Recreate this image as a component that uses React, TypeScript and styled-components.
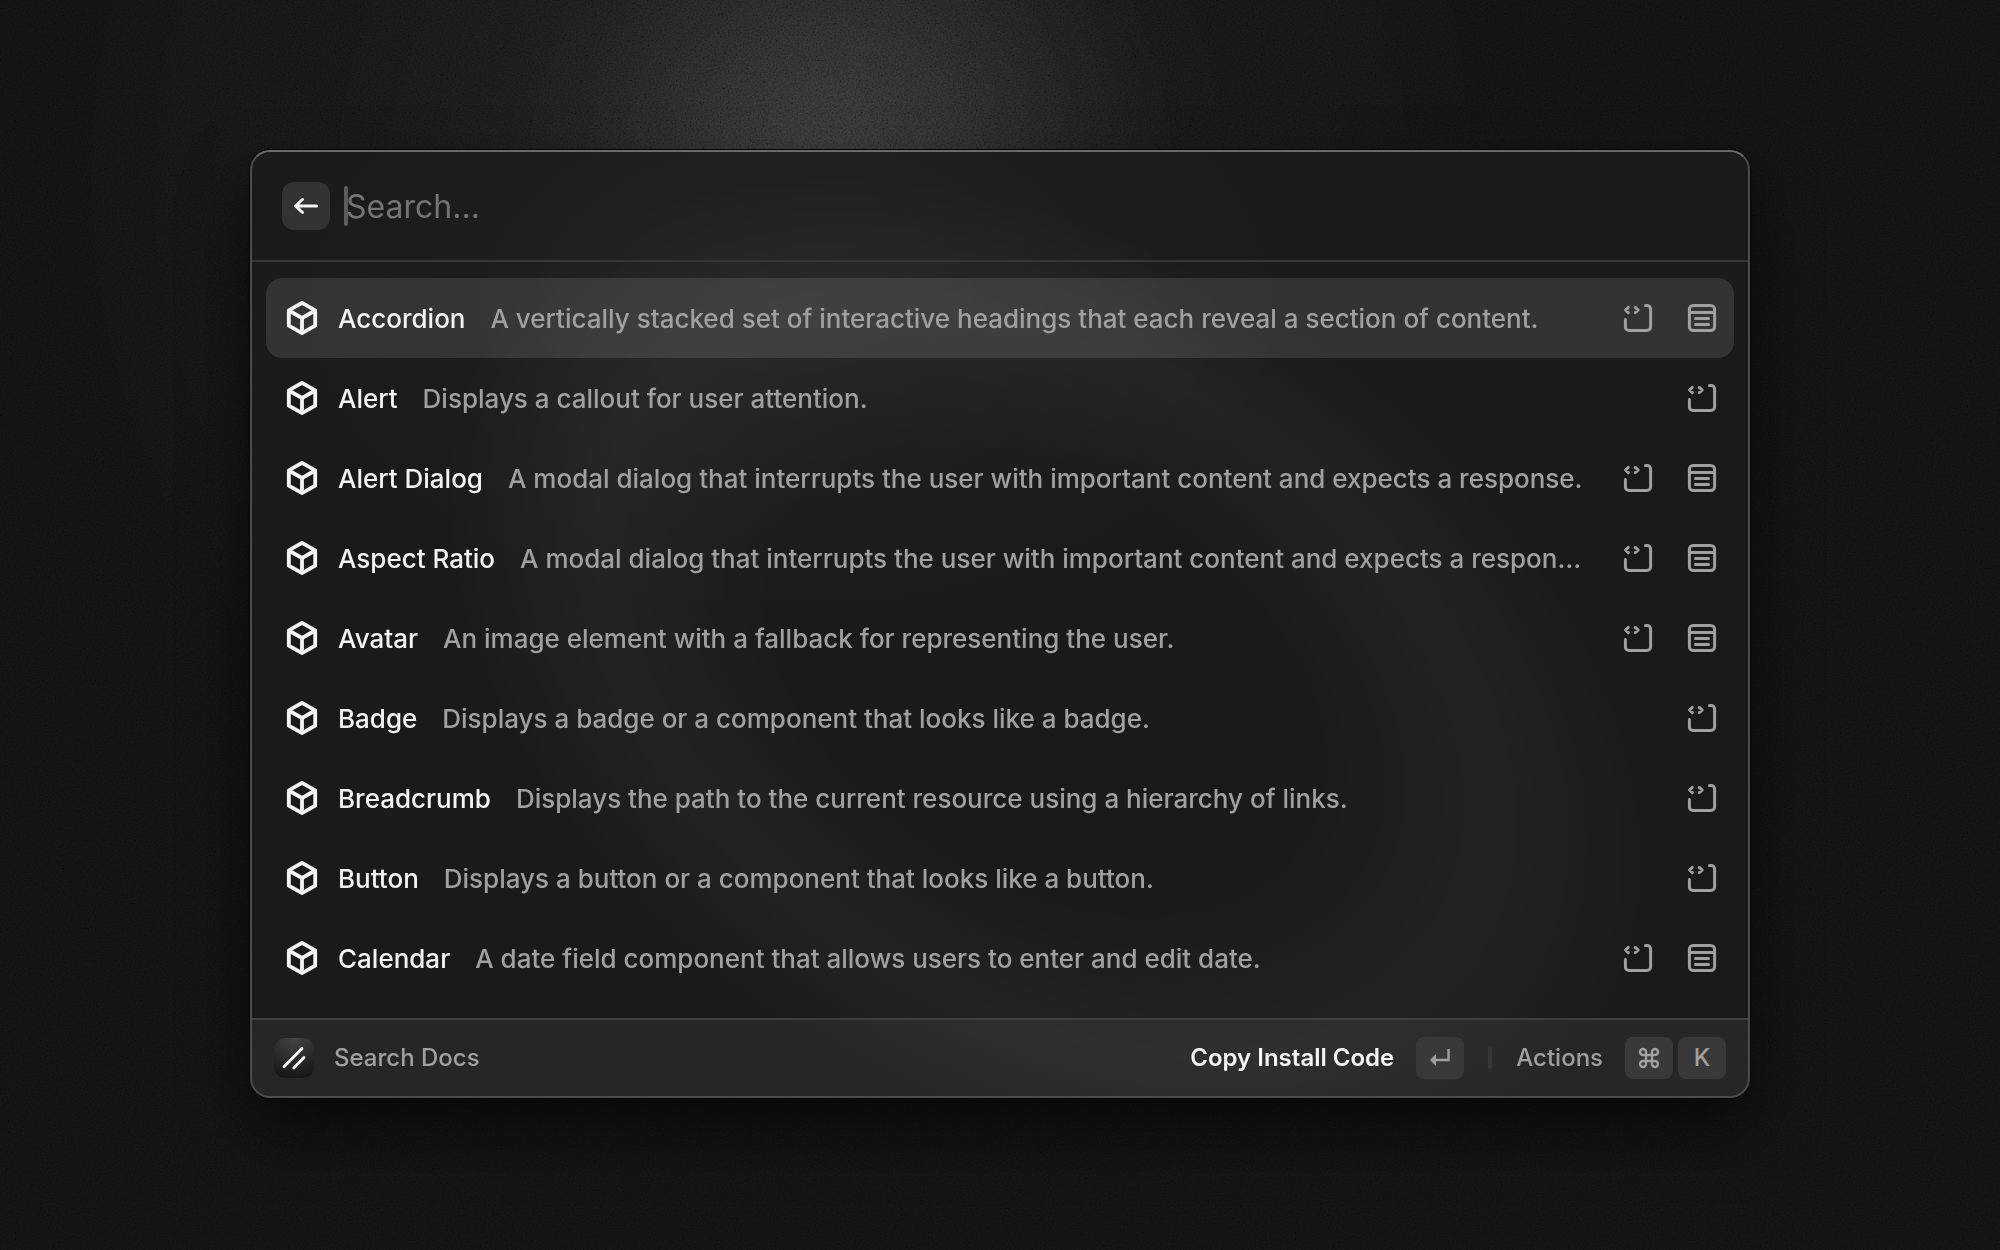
import React, { useState } from "react";
import styled, { createGlobalStyle } from "styled-components";

const GlobalStyle = createGlobalStyle`
  * { box-sizing: border-box; }
  html, body, #root { height: 100%; }
  body {
    margin: 0;
    background: #121212;
    font-family: Inter, "Liberation Sans", sans-serif;
    font-weight: 500;
    -webkit-font-smoothing: antialiased;
  }
  button, input { font: inherit; color: inherit; }
`;

const Stage = styled.main`
  position: relative;
  isolation: isolate;
  min-height: 100%;
  display: flex;
  justify-content: center;
  align-items: flex-start;
  padding: 150px 24px;
  overflow: hidden;
  background:
    radial-gradient(ellipse 17% 30% at 42% 14%, rgba(255, 255, 255, 0.1), rgba(255, 255, 255, 0.07) 35%, rgba(255, 255, 255, 0.02) 75%, transparent),
    radial-gradient(ellipse 36% 60% at 39% 14%, rgba(255, 255, 255, 0.06), rgba(255, 255, 255, 0.02) 60%, transparent),
    #121212;
`;

const Grain = styled.svg`
  position: absolute;
  inset: 0;
  z-index: -1;
  width: 100%;
  height: 100%;
  opacity: 0.3;
  mix-blend-mode: overlay;
`;

const Palette = styled.section`
  position: relative;
  isolation: isolate;
  width: 100%;
  max-width: 1500px;
  display: flex;
  flex-direction: column;
  border: 2px solid #4d4d4d;
  border-top-color: #6a6a6a;
  border-radius: 20px;
  overflow: hidden;
  color: #f4f4f4;
  box-shadow: 0 0 0 1px #050505, 0 32px 64px rgba(0, 0, 0, 0.6);
  background:
    radial-gradient(ellipse 34% 34% at 36% 16%, rgba(255, 255, 255, 0.035), rgba(255, 255, 255, 0.02) 50%, transparent),
    #1a1a1a;

  &::before {
    content: "";
    position: absolute;
    z-index: -1;
    left: 9%;
    top: 10%;
    width: 88%;
    height: 92%;
    transform: rotate(32deg);
    background: radial-gradient(closest-side, transparent 45%, rgba(255, 255, 255, 0.04) 74%, transparent 100%);
  }
`;

const Header = styled.header`
  display: flex;
  align-items: center;
  gap: 16px;
  padding: 30px;
  border-bottom: 2px solid #363636;
`;

const BackButton = styled.button`
  display: grid;
  place-items: center;
  width: 48px;
  height: 48px;
  padding: 0;
  border: 0;
  border-radius: 12px;
  background: #333;
`;

const SearchField = styled.label`
  position: relative;
  flex: 1;
  display: flex;
`;

const Caret = styled.span`
  position: absolute;
  left: -2px;
  top: 4px;
  width: 4px;
  height: 40px;
  border-radius: 2px;
  background: #5c5c5c;
`;

const SearchInput = styled.input`
  flex: 1;
  min-width: 0;
  height: 48px;
  padding: 0;
  border: 0;
  outline: 0;
  background: transparent;
  font-size: 32px;
  font-weight: 400;
  caret-color: #5c5c5c;
  &::placeholder { color: #747474; opacity: 1; }
`;

const List = styled.ul`
  margin: 0;
  padding: 16px 14px 20px;
  list-style: none;
`;

const Row = styled.li<{ $active: boolean }>`
  display: flex;
  align-items: center;
  height: 80px;
  padding: 0 16px 0 20px;
  border-radius: 16px;
  background: ${(p) => (p.$active ? "rgba(255, 255, 255, 0.11)" : "transparent")};
`;

const RowMain = styled.button`
  flex: 1;
  min-width: 0;
  display: flex;
  align-items: center;
  padding: 0;
  border: 0;
  background: transparent;
  text-align: left;
  font-size: 26px;
  line-height: 36px;
  svg { flex: none; margin-right: 20px; }
  span { padding-top: 2px; }
`;

const Name = styled.span`
  flex: none;
  margin-right: 25px;
`;

const Description = styled.span`
  flex: 0 1 auto;
  min-width: 0;
  overflow: hidden;
  white-space: nowrap;
  text-overflow: ellipsis;
  color: #a0a0a0;
`;

const RowIcons = styled.span`
  flex: none;
  display: flex;
  gap: 32px;
  margin-left: 34px;
  color: #a0a0a0;
`;

const Footer = styled.footer`
  display: flex;
  align-items: center;
  justify-content: space-between;
  height: 78px;
  padding: 0 22px;
  border-top: 2px solid #404040;
  background: rgba(255, 255, 255, 0.055);
  font-size: 24px;
  line-height: 32px;
`;

const Cluster = styled.div<{ $gap: number }>`
  display: flex;
  align-items: center;
  gap: ${(p) => p.$gap}px;
`;

const FooterLabel = styled.span`
  color: #a0a0a0;
`;

const FooterAction = styled.button<{ $primary?: boolean }>`
  display: flex;
  align-items: center;
  gap: 22px;
  padding: 0;
  border: 0;
  background: transparent;
  color: ${(p) => (p.$primary ? "#f4f4f4" : "#a0a0a0")};
  font-weight: ${(p) => (p.$primary ? 600 : 500)};
`;

const Keys = styled.span`
  display: flex;
  gap: 5px;
`;

const Key = styled.kbd`
  display: grid;
  place-items: center;
  width: 48px;
  height: 42px;
  border-radius: 8px;
  background: #393939;
  color: #a0a0a0;
  font: inherit;
  font-weight: 500;
`;

const Divider = styled.span`
  width: 4px;
  height: 22px;
  border-radius: 2px;
  background: #363636;
`;

const CubeIcon = () => (
  <svg width="32" height="36" viewBox="0 0 32 36" fill="none" stroke="currentColor" strokeWidth="3.8" strokeLinejoin="round" aria-hidden="true">
    <path d="M16 2.9 29.2 10.3v15.4L16 33.1 2.8 25.7V10.3Z" />
    <path d="M2.8 10.5 16 18l13.2-7.5M16 18v15" />
  </svg>
);

const InstallIcon = () => (
  <svg width="32" height="32" viewBox="0 0 32 32" fill="none" stroke="currentColor" strokeWidth="3" strokeLinecap="round" strokeLinejoin="round" aria-hidden="true">
    <path d="M23.5 3.4H25a3.6 3.6 0 0 1 3.6 3.6v18a3.6 3.6 0 0 1-3.6 3.6H7A3.6 3.6 0 0 1 3.4 25V17.5" />
    <path d="M6.3 5.4 3.6 8l2.7 2.6M13.3 5.4 16.2 8l-2.9 2.6" />
  </svg>
);

const DocsIcon = () => (
  <svg width="32" height="32" viewBox="0 0 32 32" fill="none" stroke="currentColor" strokeWidth="3" strokeLinecap="round" strokeLinejoin="round" aria-hidden="true">
    <rect x="3.4" y="3.4" width="25.2" height="25.2" rx="3.8" />
    <path d="M4 10.4h24M9.5 16.5h13M9.5 22.5h13" />
  </svg>
);

const ArrowIcon = () => (
  <svg width="24" height="18" viewBox="0 0 24 18" fill="none" stroke="#f4f4f4" strokeWidth="3" strokeLinecap="round" strokeLinejoin="round" aria-hidden="true">
    <path d="M22.5 9h-21M8.5 2.5 1.6 9l6.9 6.5" />
  </svg>
);

const EnterIcon = () => (
  <svg width="22" height="18" viewBox="0 0 22 18" fill="none" aria-hidden="true">
    <path d="M19.5 0v11H6" stroke="currentColor" strokeWidth="2.4" />
    <path d="M7 5v12L1 11Z" fill="currentColor" />
  </svg>
);

const CommandIcon = () => (
  <svg width="22" height="22" viewBox="0 0 22 22" fill="none" stroke="currentColor" strokeWidth="2.4" aria-hidden="true">
    <path d="M8 8V5a3 3 0 1 0-3 3h12a3 3 0 1 0-3-3v12a3 3 0 1 0 3-3H5a3 3 0 1 0 3 3Z" />
  </svg>
);

const LogoIcon = () => (
  <svg width="40" height="40" viewBox="0 0 40 40" fill="none" aria-hidden="true">
    <defs>
      <radialGradient id="logo-shade" cx="0.5" cy="0" r="1">
        <stop offset="0" stopColor="#454545" />
        <stop offset="1" stopColor="#161616" />
      </radialGradient>
    </defs>
    <rect width="40" height="40" rx="11" fill="url(#logo-shade)" />
    <path d="M10 28.8 28 10.5M19.8 30 30 19.6" stroke="#fff" strokeWidth="2.8" strokeLinecap="round" />
  </svg>
);

type Item = { name: string; text: string; docs: boolean };

const items: Item[] = [
  { name: "Accordion", text: "A vertically stacked set of interactive headings that each reveal a section of content.", docs: true },
  { name: "Alert", text: "Displays a callout for user attention.", docs: false },
  { name: "Alert Dialog", text: "A modal dialog that interrupts the user with important content and expects a response.", docs: true },
  { name: "Aspect Ratio", text: "A modal dialog that interrupts the user with important content and expects a response.", docs: true },
  { name: "Avatar", text: "An image element with a fallback for representing the user.", docs: true },
  { name: "Badge", text: "Displays a badge or a component that looks like a badge.", docs: false },
  { name: "Breadcrumb", text: "Displays the path to the current resource using a hierarchy of links.", docs: false },
  { name: "Button", text: "Displays a button or a component that looks like a button.", docs: false },
  { name: "Calendar", text: "A date field component that allows users to enter and edit date.", docs: true },
];

export default function App() {
  const [query, setQuery] = useState("");
  const [active, setActive] = useState(0);
  return (
    <>
      <GlobalStyle />
      <Stage>
        <Grain aria-hidden="true">
          <filter id="grain" x="0" y="0" width="100%" height="100%">
            <feTurbulence type="fractalNoise" baseFrequency="0.6" numOctaves="2" />
            <feColorMatrix values="1.6 0 0 0 -0.3  1.6 0 0 0 -0.3  1.6 0 0 0 -0.3  0 0 0 0 1" />
          </filter>
          <rect width="100%" height="100%" filter="url(#grain)" />
        </Grain>
        <Palette>
          <Header>
            <BackButton type="button" aria-label="Back">
              <ArrowIcon />
            </BackButton>
            <SearchField>
              {query === "" && <Caret />}
              <SearchInput aria-label="Search components" placeholder="Search..." value={query} onChange={(e) => setQuery(e.target.value)} />
            </SearchField>
          </Header>
          <List>
            {items.map((item, i) => (
              <Row key={item.name} $active={i === active}>
                <RowMain type="button" onClick={() => setActive(i)}>
                  <CubeIcon />
                  <Name>{item.name}</Name>
                  <Description>{item.text}</Description>
                </RowMain>
                <RowIcons>
                  <InstallIcon />
                  {item.docs && <DocsIcon />}
                </RowIcons>
              </Row>
            ))}
          </List>
          <Footer>
            <Cluster $gap={20}>
              <LogoIcon />
              <FooterLabel>Search Docs</FooterLabel>
            </Cluster>
            <Cluster $gap={24}>
              <FooterAction type="button" $primary>
                Copy Install Code
                <Key><EnterIcon /></Key>
              </FooterAction>
              <Divider />
              <FooterAction type="button">
                Actions
                <Keys>
                  <Key><CommandIcon /></Key>
                  <Key>K</Key>
                </Keys>
              </FooterAction>
            </Cluster>
          </Footer>
        </Palette>
      </Stage>
    </>
  );
}
